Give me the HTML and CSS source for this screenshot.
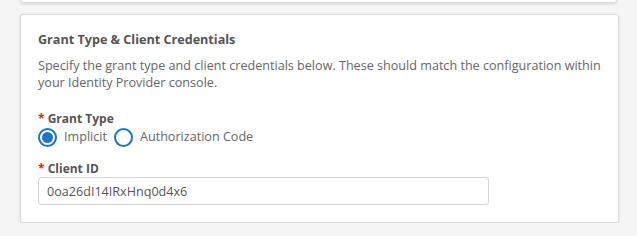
FILE: index.html
```
<!DOCTYPE html>
<html lang="en">
<head>
    <meta charset="UTF-8">
    <meta name="viewport" content="width=device-width, initial-scale=1.0">
    <title>Identity Provider</title>
    <link rel="stylesheet" href="styles.css">
</head>
<body>
    <div class="card card-prev"></div>

    <div class="card">
        <h2>Grant Type &amp; Client Credentials</h2>
        <p class="desc">Specify the grant type and client credentials below. These should match the configuration within your Identity Provider console.</p>

        <div class="form-group">
            <label class="field-label"><span class="req">*</span> Grant Type</label>
            <div class="radios">
                <label class="radio"><input type="radio" name="grant" checked><span class="dot"></span>Implicit</label>
                <label class="radio"><input type="radio" name="grant"><span class="dot"></span>Authorization Code</label>
            </div>
        </div>

        <div class="form-group">
            <label class="field-label" for="client-id"><span class="req">*</span> Client ID</label>
            <input type="text" id="client-id" class="text-input" value="0oa26dI14IRxHnq0d4x6">
        </div>
    </div>
</body>
</html>
```

FILE: styles.css
```
body {
    font-family: 'Open Sans', 'Liberation Sans', sans-serif;
    margin: 0;
    padding: 0 18px 0 20px;
    background-color: #f5f5f5;
    color: #666;
}
.card {
    background-color: #fff;
    border: 1px solid #dcdcdc;
    border-radius: 3px;
    box-shadow: 0 1px 3px rgba(0, 0, 0, 0.12);
    padding: 16px 17px 17px 17px;
}
.card-prev {
    padding: 0;
    margin-top: -4px;
    margin-bottom: 11px;
    margin-right: 2px;
    height: 5px;
}
h2 {
    margin: 0 0 8px;
    font-size: 12.6px;
    font-weight: 700;
    line-height: 18px;
    color: #555;
}
.desc {
    margin: 0 0 20px;
    font-size: 12.6px;
    line-height: 17px;
    color: #666;
}
.form-group {
    margin-bottom: 14px;
}
.form-group:last-child {
    margin-bottom: 0;
}
.field-label {
    display: block;
    font-size: 12px;
    font-weight: 700;
    line-height: 16px;
    color: #555;
}
.req {
    color: #e0261b;
}
.radios {
    display: flex;
    gap: 7px;
    margin-top: 0;
}
.radio {
    display: flex;
    align-items: center;
    font-size: 12.6px;
    line-height: 20px;
    color: #666;
    cursor: pointer;
}
.radio input {
    display: none;
}
.dot {
    width: 15px;
    height: 15px;
    border: 2px solid #1f74c9;
    border-radius: 50%;
    margin-right: 7px;
    position: relative;
}
.radio input:checked + .dot::after {
    content: "";
    position: absolute;
    top: 2px;
    left: 2px;
    width: 11px;
    height: 11px;
    border-radius: 50%;
    background-color: #1f74c9;
}
.text-input {
    display: block;
    box-sizing: border-box;
    width: 451px;
    height: 28px;
    margin-top: 0;
    padding: 0 8px;
    border: 1px solid #d4d4d4;
    border-radius: 3px;
    font-family: inherit;
    font-size: 12.6px;
    color: #555;
}
```
